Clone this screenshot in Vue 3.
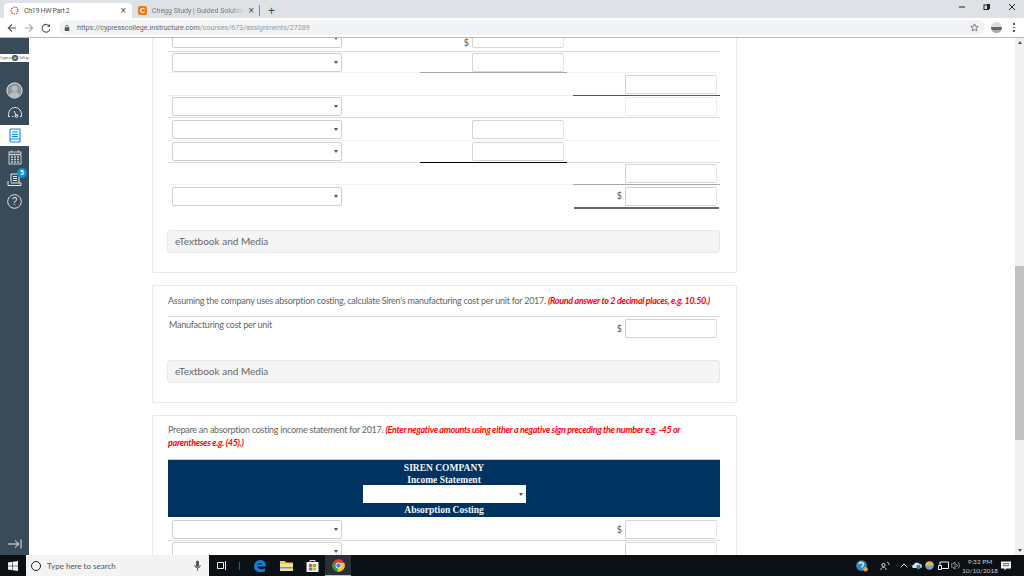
<script setup>
const rows = [
  { h: 14, sel: 1, mid: 1, dollarMid: 1, line: 'mid-line', clip: 1 },
  { h: 21, sel: 1, mid: 1, line: 'faint', midU: 'u-gray' },
  { h: 23, right: 1, line: 'faint2', rightU: 'u-dark' },
  { h: 22, sel: 1, right: 1, rightFaint: 1, line: 'mid-line' },
  { h: 23, sel: 1, mid: 1, line: 'faint' },
  { h: 22, sel: 1, mid: 1, line: 'mid-line', midU: 'u-black' },
  { h: 22, right: 1, line: 'faint', rightU: 'u-gray' },
  { h: 23, sel: 1, right: 1, dollarRight: 1, line: 'none', rightU: 'u-double' }
]
const bottomRows = [
  { h: 22, sel: 1, right: 1, dollarRight: 1, line: 'mid-line' },
  { h: 22, sel: 1, right: 1, line: 'none' }
]
</script>

<template>
  <div class="screen">
    <div class="tabbar">
      <div class="tab active">
        <svg class="favicon" viewBox="0 0 12 12"><circle cx="6" cy="6" r="4.6" fill="none" stroke="#e0352b" stroke-width="1.5" stroke-dasharray="2 1.2"/></svg>
        <span class="tab-title dark">Ch19 HW Part 2</span>
        <span class="tab-x">×</span>
      </div>
      <div class="tab">
        <span class="chegg">C</span>
        <span class="tab-title fade">Chegg Study | Guided Solutions</span>
        <span class="tab-x">×</span>
      </div>
      <span class="tab-sep"></span>
      <span class="plus">+</span>
      <div class="win">
        <svg width="8" height="8" viewBox="0 0 8 8"><path d="M1 4h6" stroke="#222" stroke-width="1"/></svg>
        <svg width="8" height="8" viewBox="0 0 8 8"><rect x="1" y="2" width="4.5" height="4.5" fill="none" stroke="#222"/><rect x="4" y="1" width="3" height="5" fill="#222"/></svg>
        <svg width="8" height="8" viewBox="0 0 8 8"><path d="M1 1l6 6M7 1L1 7" stroke="#222" stroke-width="1"/></svg>
      </div>
    </div>
    <div class="toolbar">
      <svg class="nav" viewBox="0 0 10 10"><path d="M9 5H1.5M5 1.3L1.3 5 5 8.7" fill="none" stroke="#555" stroke-width="1.1"/></svg>
      <svg class="nav" viewBox="0 0 10 10"><path d="M1 5h7.5M5 1.3L8.7 5 5 8.7" fill="none" stroke="#aaa" stroke-width="1.1"/></svg>
      <svg class="nav" viewBox="0 0 10 10"><path d="M8.4 3.3A3.9 3.9 0 1 0 8.9 6" fill="none" stroke="#555" stroke-width="1.1"/><path d="M9 .8v3H6z" fill="#555"/></svg>
      <div class="omnibox">
        <svg class="lock" viewBox="0 0 8 10"><rect x="1" y="4" width="6" height="5" fill="#555"/><path d="M2.3 4V3a1.7 1.7 0 0 1 3.4 0v1" fill="none" stroke="#555"/></svg>
        <span class="url"><span class="url-a">https://cypresscollege.instructure.com</span>/courses/673/assignments/27289</span>
        <svg class="star" viewBox="0 0 10 10"><path d="M5 1l1.2 2.7 2.9.3-2.2 1.9.7 2.9L5 7.3 2.4 8.8l.7-2.9L.9 4l2.9-.3z" fill="none" stroke="#555" stroke-width=".8"/></svg>
      </div>
      <span class="profile"></span>
      <span class="kebab"><i></i><i></i><i></i></span>
    </div>

    <div class="body">
      <aside class="side">
        <div class="logo"><span>Cypress</span><i></i><span>College</span></div>
        <div class="side-item first">
          <svg width="17" height="17" viewBox="0 0 17 17"><circle cx="8.5" cy="8.5" r="7.6" fill="#8d959b" stroke="#e8eaeb" stroke-width="1"/><circle cx="8.5" cy="6.8" r="3" fill="#b9bdc0"/><path d="M3.4 14c.6-3 2.6-3.900 5.100-3.900s4.500.9 5.100 3.900a7 7 0 0 1-10.200 0z" fill="#b9bdc0"/></svg>
        </div>
        <div class="side-item">
          <svg width="16" height="14" viewBox="0 0 16 14"><path d="M3 11.500H1.500C1 6 4 2.500 8 2.500s7 3.500 6.500 9H13M5 11.500h1.500" fill="none" stroke="#e6e8ea" stroke-width="1"/><path d="M7 6l2.500 5" stroke="#e6e8ea"/><circle cx="9.500" cy="11" r="1.400" fill="none" stroke="#e6e8ea"/></svg>
        </div>
        <div class="side-item active">
          <svg width="12" height="15" viewBox="0 0 12 15"><path d="M2 1h9v10H2.500A1.500 1.500 0 0 0 1 12.500V2a1 1 0 0 1 1-1zM1 12.500A1.500 1.500 0 0 0 2.500 14H11v-3" fill="none" stroke="#0a8fdc" stroke-width="1.100"/><path d="M3 4h6M3 6.500h6M3 8.500h6" stroke="#0a8fdc"/></svg>
        </div>
        <div class="side-item">
          <svg width="14" height="15" viewBox="0 0 14 15"><rect x="1" y="2" width="12" height="12" fill="none" stroke="#c9ced1"/><path d="M1 4.500h12" stroke="#c9ced1" stroke-width="1.500"/><path d="M3.500.5v2M10.500.5v2M3 7h2M6 7h2M9 7h2M3 9.500h2M6 9.500h2M9 9.500h2M3 12h2M6 12h2M9 12h2" stroke="#c9ced1" stroke-width="1.300"/></svg>
        </div>
        <div class="side-item inbox">
          <svg width="15" height="15" viewBox="0 0 15 15"><path d="M4 10V2h8v9M6 4.500h4M6 6.500h4M6 8.500h4" fill="none" stroke="#e6e8ea"/><path d="M1 9v4.500h13V11H4" fill="none" stroke="#e6e8ea"/></svg>
          <span class="badge">5</span>
        </div>
        <div class="side-item">
          <svg width="15" height="15" viewBox="0 0 15 15"><circle cx="7.500" cy="7.500" r="6.800" fill="none" stroke="#dfe2e4"/><text x="7.500" y="11" text-anchor="middle" class="q">?</text></svg>
        </div>
        <div class="side-spacer"></div>
        <div class="collapse">
          <svg width="15" height="10" viewBox="0 0 15 10"><path d="M1 5h11M8 1.500L12 5 8 8.500M14 .5v9" fill="none" stroke="#e6e8ea"/></svg>
        </div>
      </aside>

      <main class="main">
        <section class="card clipped">
          <div v-for="(r, i) in rows" :key="i" class="row" :class="r.line" :style="{ height: r.h + 'px' }">
            <div class="cell c1" :class="{ clip: r.clip }">
              <div v-if="r.sel" class="select"><i class="caret"></i></div>
            </div>
            <div class="cell c2" :class="[r.midU, { clip: r.clip }]">
              <span v-if="r.dollarMid" class="dollar">$</span>
              <div v-if="r.mid" class="input mid"></div>
            </div>
            <div class="gap"></div>
            <div class="cell c3" :class="r.rightU">
              <span v-if="r.dollarRight" class="dollar">$</span>
              <div v-if="r.right" class="input" :class="{ faint: r.rightFaint }"></div>
            </div>
          </div>
          <div class="media">eTextbook and Media</div>
        </section>

        <section class="card">
          <p class="question single">
            Assuming the company uses absorption costing, calculate Siren's manufacturing cost per unit for 2017.
            <em>(Round answer to 2 decimal places, e.g. 10.50.)</em>
          </p>
          <div class="row answer">
            <span class="label">Manufacturing cost per unit</span>
            <div class="cell c3 end">
              <span class="dollar">$</span>
              <div class="input"></div>
            </div>
          </div>
          <div class="media second">eTextbook and Media</div>
        </section>

        <section class="card last">
          <p class="question third">
            Prepare an absorption costing income statement for 2017.
            <em>(Enter negative amounts using either a negative sign preceding the number e.g. -45 or parentheses e.g. (45).)</em>
          </p>
          <div class="banner">
            <div class="b-line">SIREN COMPANY</div>
            <div class="b-line">Income Statement</div>
            <div class="select banner-select"><i class="caret"></i></div>
            <div class="b-line">Absorption Costing</div>
          </div>
          <div v-for="(r, i) in bottomRows" :key="'b' + i" class="row" :class="r.line" :style="{ height: r.h + 'px' }">
            <div class="cell c1"><div class="select"><i class="caret"></i></div></div>
            <div class="cell c2"></div>
            <div class="gap"></div>
            <div class="cell c3">
              <span v-if="r.dollarRight" class="dollar">$</span>
              <div class="input"></div>
            </div>
          </div>
        </section>
      </main>

      <div class="scrollbar">
        <i class="arrow up"></i>
        <div class="thumb"></div>
        <div class="track-fill"></div>
        <i class="arrow down"></i>
      </div>
    </div>

    <footer class="taskbar">
      <svg class="start" width="10" height="10" viewBox="0 0 10 10"><path d="M0 1.400L4.300.800v3.900H0zM4.800.700L10 0v4.700H4.800zM0 5.200h4.300v4L0 8.600zM4.800 5.200H10V10l-5.200-.7z" fill="#f4f4f4"/></svg>
      <div class="search">
        <span class="ring"></span>
        <span class="search-text">Type here to search</span>
        <svg width="7" height="11" viewBox="0 0 7 11"><rect x="2" y="0.500" width="3" height="6.500" rx="1.500" fill="#555"/><path d="M.7 5a2.800 2.800 0 0 0 5.600 0M3.500 8v2.500" fill="none" stroke="#555"/></svg>
      </div>
      <svg class="tb-view" width="10" height="9" viewBox="0 0 10 9"><path d="M.5 1.500h6v6h-6zM8.500 0v9" fill="none" stroke="#f0f0f0"/></svg>
      <span class="tb-sep"></span>
      <div class="tb-icon"><svg width="14" height="14" viewBox="0 0 14 14"><path d="M1 7.500C1 3.500 4 1 7.500 1 11 1 13 3.800 13 7.500H4.500c.2 2.800 4.500 3.600 7.500 1.700v3c-4.800 2-11 .6-11-4.700zM4.600 5.500h4.600C9 3.500 5 3.500 4.600 5.500z" fill="#0c7fd6"/></svg></div>
      <div class="tb-icon"><svg width="13" height="11" viewBox="0 0 13 11"><path d="M0 1h5l1 1.500h7V11H0z" fill="#f5c84c"/><rect x="0" y="4" width="13" height="7" fill="#fbe08a"/><rect x="0" y="7" width="13" height="1.500" fill="#45a5e5"/></svg></div>
      <div class="tb-icon"><svg width="13" height="13" viewBox="0 0 13 13"><path d="M4 3V1.500h5V3" fill="none" stroke="#ddd"/><rect x="0.500" y="3" width="12" height="10" fill="#f3f3f3"/><rect x="3" y="5" width="3.200" height="3" fill="#e8552b"/><rect x="6.800" y="5" width="3.200" height="3" fill="#7cb82f"/><rect x="3" y="8.500" width="3.200" height="3" fill="#1c96e0"/><rect x="6.800" y="8.500" width="3.200" height="3" fill="#f7b500"/></svg></div>
      <div class="tb-icon chrome-on"><svg width="13" height="13" viewBox="0 0 13 13"><circle cx="6.500" cy="6.500" r="6.300" fill="#e0412f"/><path d="M6.500 6.500L.9 3.700A6.300 6.300 0 0 0 5.500 12.700z" fill="#2f9e44"/><path d="M6.500 6.500l-1 6.200A6.300 6.300 0 0 0 12.300 4H6.500z" fill="#f6c026"/><circle cx="6.500" cy="6.500" r="2.900" fill="#fff"/><circle cx="6.500" cy="6.500" r="2.200" fill="#3f83e8"/></svg></div>
      <div class="tb-spacer"></div>
      <svg width="12" height="12" viewBox="0 0 12 12" class="tray help"><circle cx="5.500" cy="5.500" r="5.300" fill="#2f8fc4"/><path d="M3 3.500c1.500-1.500 4-1.200 4.500.3S6 6 5.800 7.500" fill="none" stroke="#e6f3fa" stroke-width="1.300"/><circle cx="9.500" cy="9.300" r="2.300" fill="#f0a41e"/></svg>
      <svg width="10" height="9" viewBox="0 0 10 9" class="tray people"><circle cx="3.500" cy="4" r="1.600" fill="none" stroke="#ddd"/><path d="M.8 9c.2-2 1.400-2.800 2.700-2.800S6 7 6.200 9M7.500 1l1.800 3" fill="none" stroke="#ddd" stroke-width=".9"/></svg>
      <svg width="8" height="5" viewBox="0 0 8 5" class="tray caret-up"><path d="M.7 4.300L4 1l3.300 3.300" fill="none" stroke="#eee"/></svg>
      <svg width="10" height="9" viewBox="0 0 10 9" class="tray cloud"><path d="M1 7a2 2 0 0 1 1-3.600A3 3 0 0 1 7.500 3 2.200 2.200 0 0 1 9 7z" fill="#dfe6ea"/><circle cx="6.500" cy="6" r="2.200" fill="#2f7fc1"/></svg>
      <svg width="9" height="9" viewBox="0 0 9 9" class="tray weather"><circle cx="4.500" cy="4.500" r="4.300" fill="#7f9fc0"/><path d="M.4 4.500a4.100 4.100 0 0 1 8.200 0z" fill="#e9b25c"/></svg>
      <svg width="11" height="9" viewBox="0 0 11 9" class="tray net"><path d="M2 1h8.500v6.500H4M2 1v3M.5 4.500h3v4h-3z" fill="none" stroke="#eee"/></svg>
      <svg width="10" height="9" viewBox="0 0 10 9" class="tray vol"><path d="M0 3h1.500L4 1v7L1.500 6H0zM5.500 3a2 2 0 0 1 0 3M7 1.500a4 4 0 0 1 0 6" fill="none" stroke="#bbb" stroke-width=".8"/></svg>
      <div class="clock"><span>9:32 PM</span><span>10/10/2018</span></div>
      <svg width="10" height="10" viewBox="0 0 10 10" class="notif"><path d="M0 .5h10v7H5.500L3.500 9.500v-2H0z" fill="#f4f4f4"/><path d="M2 2.700h6M2 4.700h6" stroke="#222" stroke-width=".7"/></svg>
    </footer>
  </div>
</template>

<style>
html, body { margin: 0; padding: 0; background: #fff; overflow: hidden; }
</style>

<style scoped>
.screen { width: 1024px; height: 576px; display: flex; flex-direction: column; overflow: hidden; font-family: Lato, "Noto Sans", sans-serif; color: #555; }

.tabbar { height: 18px; background: #dee1e6; display: flex; align-items: flex-end; padding-left: 4px; flex: none; box-sizing: border-box; }
.tab { width: 128px; height: 15px; display: flex; align-items: center; box-sizing: border-box; padding: 0 6px; font: 7px Roboto, sans-serif; }
.tab.active { background: #fff; border-radius: 4px 4px 0 0; }
.favicon { width: 9px; height: 9px; flex: none; margin-right: 5px; }
.chegg { width: 9px; height: 9px; flex: none; margin-right: 5px; border-radius: 2px; background: #f07a1a; color: #fff; font: bold 7px/9px "Liberation Sans", sans-serif; text-align: center; }
.tab-title { flex: 1; min-width: 0; white-space: nowrap; overflow: hidden; color: #777; }
.tab-title.dark { color: #555; letter-spacing: -.3px; }
.tab-title.fade { margin-right: 3px; -webkit-mask-image: linear-gradient(90deg, #000 85%, transparent); mask-image: linear-gradient(90deg, #000 85%, transparent); }
.tab-x { color: #444; font: 10px/10px "Liberation Sans", sans-serif; }
.tab-sep { width: 1px; height: 11px; background: #888; margin: 0 0 2px -1px; }
.plus { color: #444; font: 12px/13px "Liberation Sans", sans-serif; margin-left: 8px; }
.win { margin-left: auto; align-self: flex-start; display: flex; gap: 17px; margin-top: 3px; padding-right: 8px; }

.toolbar { height: 20px; flex: none; box-sizing: border-box; background: #fff; border-bottom: 1px solid #b9b9b9; display: flex; align-items: center; padding-left: 7px; }
.nav { width: 10px; height: 10px; margin-right: 7px; flex: none; }
.omnibox { margin-left: 1px; width: 926px; height: 15px; background: #f1f3f4; border-radius: 8px; display: flex; align-items: center; box-sizing: border-box; padding: 0 6px 0 5px; }
.lock { width: 6px; height: 8px; margin-right: 7px; flex: none; }
.url { font: 7.150px Roboto, sans-serif; color: #999; flex: 1; white-space: nowrap; }
.url-a { color: #666; }
.star { width: 9px; height: 9px; }
.profile { width: 11px; height: 11px; border-radius: 50%; margin-left: 6px; background: linear-gradient(#ddd 0 45%, #666 45% 70%, #aaa 70%); flex: none; }
.kebab { display: flex; flex-direction: column; gap: 2px; margin-left: 11px; }
.kebab i { width: 1.500px; height: 1.500px; background: #555; display: block; }

.body { flex: 1; min-height: 0; display: flex; }
.side { width: 29px; flex: none; background: #394b58; display: flex; flex-direction: column; padding-top: 16px; box-sizing: border-box; }
.logo { height: 8px; background: #fff; display: flex; align-items: center; justify-content: center; font: 3.800px/8px "Liberation Serif", serif; color: #444; white-space: nowrap; overflow: hidden; }
.logo i { width: 6px; height: 6px; background: #c9a93a; border-radius: 50%; flex: none; box-shadow: inset 0 0 0 1.500px #2b5f8f; }
.side-item { height: 22px; display: flex; align-items: center; justify-content: center; position: relative; }
.side-item.first { margin-top: 17px; }
.side-item.active { background: #fff; height: 21px; margin-top: 2px; }
.q { font: 10px "Liberation Sans", sans-serif; fill: #dfe2e4; }
.badge { position: absolute; left: 17px; top: 0; width: 10px; height: 10px; border-radius: 50%; background: #0a8fdc; color: #fff; font: bold 6.500px/10px "Liberation Sans", sans-serif; text-align: center; }
.side-spacer { flex: 1; }
.collapse { height: 22px; display: flex; align-items: center; justify-content: center; }

.main { flex: 1; min-width: 0; overflow: hidden; padding-left: 123px; box-sizing: border-box; }
.card { width: 585px; box-sizing: border-box; background: #fff; border: 1px solid #e9e9e9; border-radius: 2px; padding: 0 16px 19px 15px; margin-bottom: 12px; box-shadow: 0 0 1px #eee; }
.card.clipped { border-top: 0; }
.card.last { padding-bottom: 0; }

.row { display: grid; grid-template-columns: 252px 147px 6px 147px; box-sizing: border-box; border-bottom: 1px solid transparent; }
.row.mid-line { border-bottom-color: #dcdcdc; }
.row.faint { border-bottom-color: #f3f3f3; }
.row.faint2 { border-bottom-color: #ececec; }
.cell { display: flex; align-items: center; box-sizing: border-box; margin-bottom: -1px; border-bottom: 1px solid transparent; }
.cell.clip { overflow: hidden; align-items: flex-end; padding-bottom: 3px; }
.c1 { padding-left: 4px; }
.c2, .c3 { justify-content: flex-end; padding-right: 3px; }
.u-gray { border-bottom-color: #aaa; }
.u-dark { border-bottom-color: #555; }
.u-black { border-bottom-color: #000; }
.u-double { border-bottom: 2px solid #666; margin-bottom: -2px; margin-left: 1px; margin-right: 1px; padding-right: 2px; }
.select { width: 170px; height: 19px; flex: none; box-sizing: border-box; border: 1px solid #cfcfcf; border-radius: 2px; background: #fff; display: flex; align-items: center; justify-content: flex-end; padding-right: 3px; }
.caret { width: 0; height: 0; border: 2px solid transparent; border-top: 3px solid #555; border-bottom: 0; }
.input { width: 92px; height: 19px; flex: none; box-sizing: border-box; border: 1px solid #d4d4d4; border-right-color: #e6e6e6; border-radius: 2px; background: #fff; }
.input.faint { border-color: #ececec; }
.dollar { font-size: 9px; color: #555; margin-right: 3px; line-height: 10px; }

.media { height: 23px; margin: 22px 0 0 -1px; box-sizing: border-box; background: #f4f4f4; border: 1px solid #e8e8e8; border-radius: 3px; font-size: 10px; line-height: 21px; padding-left: 7px; color: #666; }
.media.second { margin-top: 21px; }

.question { margin: 0; font-size: 9px; letter-spacing: -.25px; line-height: 13px; color: #666; padding-top: 8px; }
.question em { color: #f00; font-weight: 700; font-style: italic; letter-spacing: -.32px; }
.question.single { height: 31px; box-sizing: border-box; border-bottom: 1px solid #dcdcdc; }
.question.third { padding-top: 7px; }
.row.answer { height: 22px; grid-template-columns: 1fr 147px; }
.label { font-size: 9px; letter-spacing: -.25px; color: #666; padding: 2px 0 0 1px; }
.c3.end { padding-right: 3px; padding-top: 2px; }

.banner { margin: 10px 0 2px; height: 58px; background: #00335f; border-top: 1px solid #c8d0d8; box-sizing: border-box; display: flex; flex-direction: column; align-items: center; color: #fff; padding-top: 2px; }
.b-line { font: bold 9.500px/12px "Liberation Serif", serif; color: #f2f5f8; }
.banner-select { width: 163px; height: 18px; border: 0; border-radius: 0; margin: -1px 0 1px; }

.scrollbar { width: 9px; flex: none; background: #f1f1f1; display: flex; flex-direction: column; align-items: center; }
.arrow { width: 0; height: 0; border: 2.500px solid transparent; flex: none; }
.arrow.up { border-bottom: 3px solid #555; border-top: 0; margin: 3px 0 222px; }
.arrow.down { border-top: 3px solid #555; border-bottom: 0; margin: 0 0 3px; }
.thumb { width: 100%; height: 174px; background: #c1c1c1; flex: none; }
.track-fill { flex: 1; }

.taskbar { height: 21px; flex: none; background: #0b1015; display: flex; align-items: center; color: #ddd; }
.start { margin: 0 8px; flex: none; }
.search { width: 183px; height: 21px; background: #f3f3f3; display: flex; align-items: center; box-sizing: border-box; padding: 0 8px 0 5px; }
.ring { width: 10px; height: 10px; box-sizing: border-box; border: 1.500px solid #222; border-radius: 50%; margin-right: 6px; flex: none; }
.search-text { flex: 1; color: #555; font-size: 8px; }
.tb-view { margin-left: 8px; flex: none; }
.tb-sep { width: 1px; height: 8px; background: #555; margin: 0 7px 0 12px; }
.tb-icon { width: 26px; height: 21px; display: flex; align-items: center; justify-content: center; flex: none; box-sizing: border-box; }
.chrome-on { background: #2a2f35; border-bottom: 1px solid #9cc3e0; }
.tb-spacer { flex: 1; }
.tray { flex: none; }
.help { margin-right: 12px; }
.people { margin-right: 10px; }
.caret-up { margin-right: 4px; }
.cloud { margin-right: 2.500px; }
.weather { margin-right: 4px; }
.net { margin-right: 2.500px; }
.vol { margin-right: 3px; }
.clock { display: flex; flex-direction: column; align-items: center; font-size: 6.500px; line-height: 9px; color: #ccc; width: 32px; flex: none; }
.notif { margin: 0 13px 0 5px; flex: none; }
</style>
